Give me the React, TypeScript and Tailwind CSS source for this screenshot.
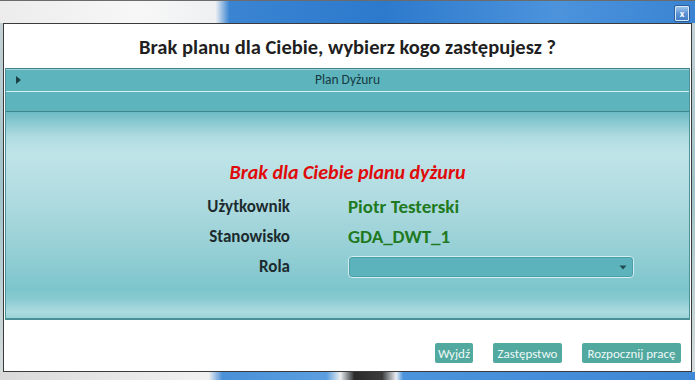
import React from 'react'

const font = { fontFamily: 'Carlito, Lato, "Noto Sans", sans-serif' }

const rows = [
  { label: 'Użytkownik', value: 'Piotr Testerski' },
  { label: 'Stanowisko', value: 'GDA_DWT_1' },
]

function CloseButton() {
  return (
    <div className="w-[16px] h-[17px] rounded-[2px] border border-[#2c5e9c] bg-[linear-gradient(to_bottom,#a9cdf0,#5b93d4_50%,#3f7cc6)] flex items-center justify-center shadow-[inset_0_0_0_1px_#d7e8f8]">
      <span className="text-[10px] leading-none font-bold text-white">x</span>
    </div>
  )
}

function RoleSelect() {
  return (
    <div className="w-[286px] h-[22px] rounded-[4px] border border-[#d3eef1] bg-[#5cb3bc] shadow-[inset_0_0_0_1px_#4c9ea8] flex items-center justify-end pr-[6px]">
      <svg width="8" height="5" viewBox="0 0 8 5">
        <path d="M0.5 0.5 L7.5 0.5 L4 4.5 Z" fill="#1f4a52" />
      </svg>
    </div>
  )
}

export default function App() {
  return (
    <div
      className="w-[695px] h-[380px] overflow-hidden flex flex-col bg-[linear-gradient(to_bottom,#c9d3d6,#9fc3c9_50%,#d8dcdd)]"
      style={font}
    >
      {/* desktop strip above the window */}
      <div className="h-[23px] shrink-0 border-t border-[#6b6b6b] bg-[linear-gradient(to_right,#ececec_0%,#f7f7f7_20%,#eef0f2_31%,#3a84d2_33%,#2d79cc_55%,#4c93dc_80%,#3a84d3_100%)] flex justify-end items-start pt-[4px] pr-[5px]">
        <CloseButton />
      </div>

      {/* dialog */}
      <div className="ml-[3px] w-[689px] h-[349px] shrink-0 border border-[#3b3b3b] bg-white flex flex-col">
        <div className="h-[44px] shrink-0 flex items-center justify-center">
          <h1 className="text-[20.5px] font-bold text-[#1f1f1f] leading-none pt-[2px]">
            Brak planu dla Ciebie, wybierz kogo zastępujesz ?
          </h1>
        </div>

        <div className="mx-[1px] flex-1 flex flex-col border-x border-[#4b929b]">
          {/* expander header */}
          <div className="h-[23px] shrink-0 border-t border-[#3f828b] bg-[#5db4bd] shadow-[inset_0_1px_0_#9fd3d9] flex items-center">
            <svg className="ml-[10px]" width="5" height="8" viewBox="0 0 5 8">
              <path d="M0 0 L5 4 L0 8 Z" fill="#1d3f47" />
            </svg>
            <span className="flex-1 text-center text-[13.5px] leading-none text-[#15393f] pr-[15px]">
              Plan Dyżuru
            </span>
          </div>
          <div className="h-[1px] shrink-0 bg-[#d5eef1]" />
          <div className="h-[20px] shrink-0 bg-[#5db4bd] border-b border-[#3e858e]" />

          {/* content panel */}
          <div className="flex-1 flex flex-col items-center pt-[48px] bg-[linear-gradient(to_bottom,#6dbbc4_0%,#b0dce1_12%,#bfe4e8_20%,#addadf_45%,#92ced4_70%,#7cc5cc_86%,#8acbd1_91%,#acdbe0_97%,#9ad3d8_100%)] border-b-2 border-[#4b8f97]">
            <p className="h-[24px] flex items-center text-[20px] font-bold italic text-[#e00a0a]">
              Brak dla Ciebie planu dyżuru
            </p>
            <div className="mt-[8px] self-start ml-[184px] grid grid-cols-[100px_286px] gap-x-[58px]">
              {rows.map((r) => (
                <React.Fragment key={r.label}>
                  <span className="h-[30px] flex items-center justify-end text-[17px] font-bold text-[#1c2b2e]">
                    {r.label}
                  </span>
                  <span className="h-[30px] flex items-center text-[19px] font-bold text-[#1f7a1f]">
                    {r.value}
                  </span>
                </React.Fragment>
              ))}
              <span className="h-[30px] flex items-center justify-end text-[17px] font-bold text-[#1c2b2e]">
                Rola
              </span>
              <div className="h-[30px] flex items-center">
                <RoleSelect />
              </div>
            </div>
          </div>
        </div>

        {/* footer buttons */}
        <div className="h-[51px] shrink-0 flex items-end justify-end gap-[20px] pr-[10px] pb-[8px]">
          <button className="w-[38px] h-[20px] rounded-[2px] bg-[#51a99f] text-[13px] leading-none text-[#eef8f7]">
            Wyjdź
          </button>
          <button className="w-[69px] h-[20px] rounded-[2px] bg-[#51a99f] text-[13px] leading-none text-[#eef8f7]">
            Zastępstwo
          </button>
          <button className="w-[99px] h-[20px] rounded-[2px] bg-[#51a99f] text-[13px] leading-none text-[#eef8f7]">
            Rozpocznij pracę
          </button>
        </div>
      </div>

      {/* desktop strip below the window */}
      <div className="flex-1 bg-[linear-gradient(to_right,#d9d9d9_0%,#f1f1f1_30%,#4a90d8_32%,#5b9fe0_47%,#e9edf0_49%,#2a2a2a_51%,#3c3c3c_55%,#eaeef2_57%,#4b93dc_58%,#3f88d6_100%)]" />
    </div>
  )
}
